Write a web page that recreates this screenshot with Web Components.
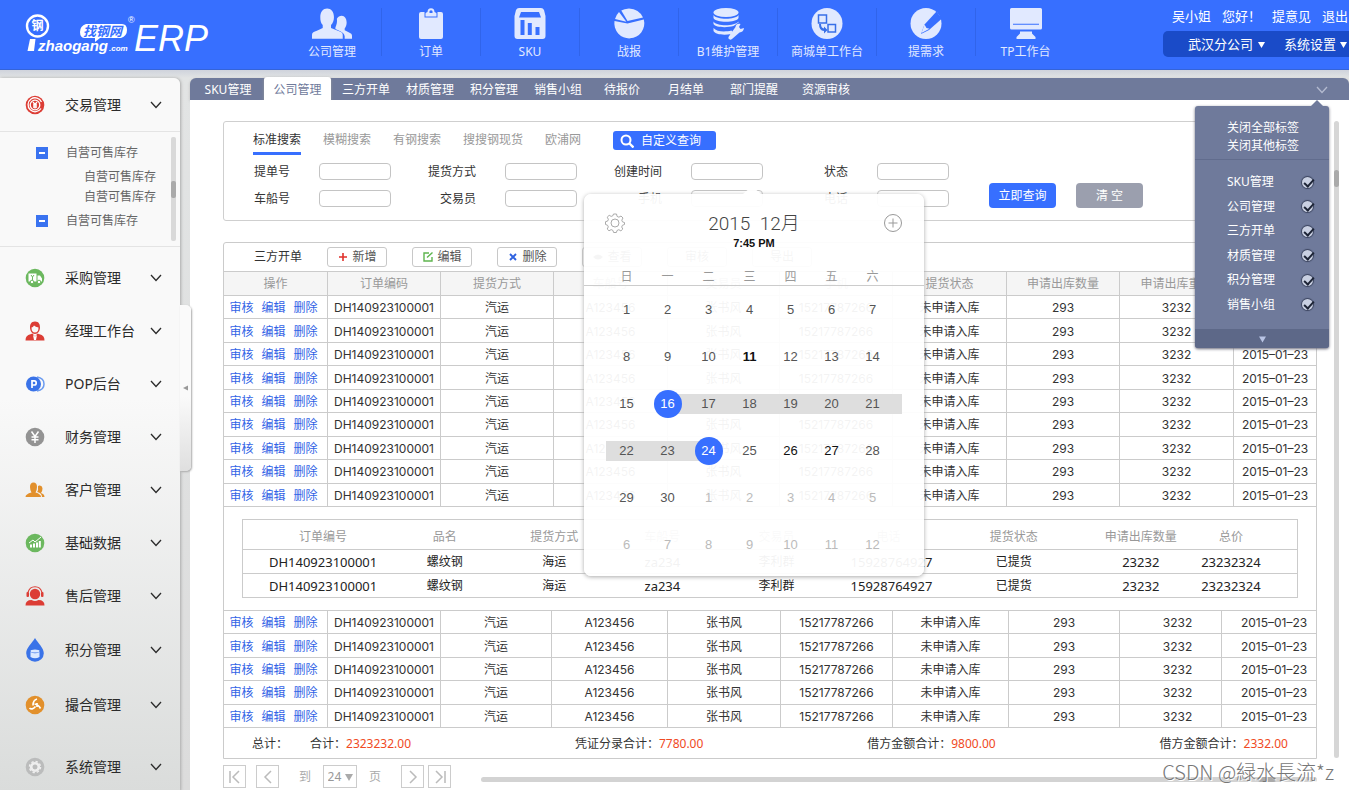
<!DOCTYPE html>
<html lang="zh-CN">
<head>
<meta charset="utf-8">
<title>找钢网 ERP</title>
<style>
html{background:#dfe1e3}
body{margin:0;font:12px/16px "Noto Sans","Noto Sans CJK SC",sans-serif;color:#333}
</style>
</head>
<body>
<erp-app></erp-app>
<script>
const define = (name, css, render) => customElements.define(name, class extends HTMLElement {
  connectedCallback() {
    if (this.shadowRoot) return;
    const root = this.attachShadow({ mode: 'open' });
    root.innerHTML = `<style>*{box-sizing:border-box}button,select,input{font:inherit;color:inherit;margin:0;padding:0;border:0;background:none}a{text-decoration:none;color:inherit}${css}</style>${render(this)}`;
  }
});

const disc = (c, inner) => `<circle cx="10" cy="10" r="9.300" fill="${c}"/>${inner}`;
const icons = {
  people: ['0 0 41 32', `<path d="M0 31v-4c0-2 2-3 5-4l6-3v-3c-2-2-2.500-5-2.500-8 0-6 3-9 7-9s7 3 7 9c0 3-1 6-3 8v3l7 3c3 1 5 2 5 4v4z"/><path d="M33.500 31H41v-3c0-1.500-1-2.300-3-3.200L33.500 22.500v-2c1.500-2 2-4 2-6 0-4-2-7-5-7-2 0-4 1-5 3 .5 3-.2 6-1.500 9v1.500l5 2.500c2.500 1.200 4 2.500 4.500 5z"/>`],
  clipboard: ['0 0 40 32', `<path d="M10 4h3.500v5.500h13V4H30q2 0 2 2v23q0 2-2 2H10q-2 0-2-2V6q0-2 2-2z"/><path fill-rule="evenodd" d="M14.500 8.500V5.500q0-1 2-1.500 0-3.800 3.500-3.800T23.500 4q2 .5 2 1.500v3zM18.500 5h3V3q-1.500-1.500-3 0z"/>`],
  store: ['0 0 40 32', `<path fill-rule="evenodd" d="M9 0h22q2 0 3 2l1.500 6V28q0 3-3 3H7.500q-3 0-3-3V8L6 2q1-2 3-2zM11 4 9 9.500h22L29 4zM10.500 12v15h4V12zM17.800 15v12h4V15zM25.500 19v8h4v-8z"/>`],
  pie: ['0 0 40 32', `<path d="M18.500 15.500 34.800 11.500A15 15 0 1 1 5.500 13z"/><path d="M17.300 13.700 6 11A16 16 0 0 1 10 4z"/><path d="M18.500 13 12.300 2.500Q15 .8 20 .5q10 .5 14 9z"/>`],
  database: ['0 0 40 32', `<ellipse cx="18" cy="4.500" rx="12.500" ry="4.500"/><path d="M5.500 7c3 5 22 5 25 0v3c-2 5-23 5-25 0zM5.500 13.500c3 5 21 5 25 0v1l-5 3.500c-7 2-18 1.500-20-2zM5.500 20c3 4 12 4 18 2.500l1 1.500-1.500 2c-7 1.500-16 .5-17.500-3zM27.500 19c0-3 3-4 5-3l-1.500 3 1.500 2 3.500-1q-.5 4-4.500 4.500L24 31q-2 1.500-3.500-.5-.5-1.500 1-3z"/>`],
  flow: ['0 0 40 32', `<circle cx="20" cy="15.500" r="15.500"/><g fill="none" stroke="#386fe8" stroke-width="1.500"><path d="M11.500 7h8v8h-8zM21 16.500h7.500v7.500H21z"/></g><path fill="#386fe8" d="M14 16q0 4 3 4.500v-2l3.500 3.500-3.500 3.500V23q-5-.5-5-7z"/>`],
  pencil: ['0 0 40 32', `<circle cx="20" cy="15.500" r="15.500"/><path fill="#376fff" d="M18.500 16.500 30.500 3.500 36 10.500 23 22l-8 4z"/><path d="m15.500 25 3-8.500 2 3.500 3 .8z"/>`],
  monitor: ['0 0 40 32', `<path fill-rule="evenodd" d="M5.500 0h29q1.500 0 1.500 1.500V20q0 1.500-1.500 1.500h-29Q4 21.500 4 20V1.500Q4 0 5.500 0zM7 15.800v1h26v-1z"/><path d="M14 23.500h12v2l3.500 3.500v2h-19v-2l3.500-3.500z"/>`],
  trade: ['0 0 20 20', disc('#dc3d35', `<g fill="none" stroke="#fff" stroke-width="1.300"><path d="M16 13.500A7 7 0 1 1 16.500 7"/><circle cx="10" cy="10" r="4.800"/><path d="m8 7 2 2.500L12 7M10 9.500v4M8 10h4M8 12h4"/></g>`)],
  truck: ['0 0 20 20', disc('#6cb85f', `<path fill="#fff" d="M3.500 5.500h8v8h-8zM12.500 7.500h2.500l2 3v3h-4.500z"/><circle cx="7" cy="14" r="1.800" fill="#fff" stroke="#6cb85f"/><circle cx="14" cy="14" r="1.800" fill="#fff" stroke="#6cb85f"/><path stroke="#6cb85f" fill="none" d="m6 7 1.500 2L9 7M7.500 9v3"/>`)],
  manager: ['0 0 20 20', `<g fill="#dc3d35"><path d="M.5 19.500q0-5.500 5-6.300l2-.7 2.500 3 2.500-3 2 .7q5 .8 5 6.300z"/><path fill-rule="evenodd" d="M10 .5c4 0 5 3 5 6s-2 6.500-5 6.500-5-3.500-5-6.500 1-6 5-6zM6.500 6.500q0 5 3.500 5t3.500-5q-3-.3-4.500-2-1 1.800-2.500 2z"/></g><path fill="#fff" d="m8 14 2 1.500 2-1.500-1 5h-2z"/>`],
  pop: ['0 0 20 20', `<g fill="none" stroke="#6b9bf0" stroke-width="1.500"><path d="M12 3q7 1 7 7t-7 7"/></g><circle cx="8.500" cy="10" r="7.500" fill="#3a73e8"/><path fill="none" stroke="#fff" stroke-width="1.700" d="M7 14V6.800h2.200q2 .1 2 2.100t-2 2.100H7"/>`],
  yen: ['0 0 20 20', disc('#939393', `<path stroke="#fff" fill="none" stroke-width="1.500" d="m6.500 4.500 3.500 5 3.500-5M10 9.500v6.500M6.500 10h7M6.500 12.800h7"/>`)],
  clients: ['0 0 20 20', `<g fill="#e2902c"><path d="M.5 17q0-3 6-4.500Q5 10 5 7q0-4.500 3.500-4.500T12 7q0 3-1.500 5.500Q16 14 16 17z"/><path d="M17 17h2.500q0-3-3.500-4 1.500-2 1.500-4.500T15 5.500 13 7q.5 3-.8 5Q17 13 17 17z"/></g>`],
  chart: ['0 0 20 20', disc('#6cb85f', `<g stroke="#fff" fill="none"><path stroke-width="2" d="M6 14.500v-3M9 14.500v-4M12 14.500v-5M14.800 14.500V8"/><path d="m4 10 4-3 2 2 6-5"/></g>`)],
  service: ['0 0 20 20', `<g fill="#dc3d35"><circle cx="10" cy="8" r="5.200"/><path d="M.5 19.500q0-5.500 6-5.500 3.500 2 7 0 6 0 6 5.500z"/><rect x="1.500" y="6" width="2.500" height="5" rx="1"/><rect x="16" y="6" width="2.500" height="5" rx="1"/></g><path fill="none" stroke="#dc3d35" stroke-width="1.100" d="M3 6.500Q4.500.8 10 .8t7 5.700"/>`],
  drop: ['0 0 20 24', `<path fill="#3a73e8" d="M10 0C13 5 18.800 10 18.800 15.200a8.800 8.500 0 0 1-17.600 0C1.200 10 7 5 10 0z"/><g fill="#dce8ff"><ellipse cx="10" cy="13" rx="4.500" ry="1.500"/><path d="M5.500 14q4.500 2.500 9 0v5q-4.500 2.500-9 0z"/></g>`],
  match: ['0 0 20 20', disc('#e2902c', `<path fill="none" stroke="#fff" stroke-width="1.700" d="M12 4q-4 1-4 6.500M4.500 13q2.500 2.500 6-1.500M9.500 9q4 .5 6 4.500M12 8v4"/>`)],
  gear: ['0 0 20 20', disc('#bbbcbc', `<circle cx="10" cy="10" r="3.800" fill="none" stroke="#eee" stroke-width="2.600"/><circle cx="10" cy="10" r="5.500" fill="none" stroke="#eee" stroke-width="1.500" stroke-dasharray="2.300 2"/>`)],
  down: ['0 0 12 12', `<path d="m1 3 5 5.500L11 3" fill="none" stroke="currentColor" stroke-width="1.300"/>`],
  search: ['0 0 14 14', `<circle cx="6" cy="6" r="4.500" fill="none" stroke="currentColor" stroke-width="2"/><path d="m9.500 9.500 4 4" stroke="currentColor" stroke-width="2.400"/>`],
  add: ['0 0 10 10', `<path d="M5 1v8M1 5h8" stroke="#e0312b" stroke-width="1.600"/>`],
  edit: ['0 0 10 10', `<path d="M6 1H1v8h8V5M4 5.500 9.500.5" fill="none" stroke="#5fb54f" stroke-width="1.400"/>`],
  remove: ['0 0 10 10', `<path d="m2 2 6 6M8 2 2 8" stroke="#2f62e0" stroke-width="1.900"/>`],
  view: ['0 0 10 10', `<path d="M0 5q5-5 10 0-5 5-10 0z" fill="#555"/>`],
  cog: ['0 0 20 20', `<g fill="none" stroke="#aaa"><path d="M8.500 1h3l.6 2.400 1.800.8L16 3l2 2-1.200 2.200.7 1.700 2 .6v2l-2.100.8-.7 1.700L17.800 16l-1.900 1.900-2.100-1.200-1.800.8-.6 2h-2.800l-.7-2.100-1.700-.8L4 17.800 2.200 16l1.100-2.100-.8-1.700L.5 11.500v-2.800l2.100-.6.8-1.800L2.200 4.200 4.200 2.300l2 1.100 1.700-.7z"/><circle cx="10" cy="10" r="4"/></g>`],
  plus: ['0 0 20 20', `<g fill="none" stroke="#999"><circle cx="10" cy="10" r="8.500"/><path d="M10 5.500v9M5.500 10h9"/></g>`],
  first: ['0 0 14 14', `<path d="M2 1v12M11 1 5 7l6 6" fill="none" stroke="currentColor" stroke-width="1.500"/>`],
  prev: ['0 0 14 14', `<path d="M10 1 4 7l6 6" fill="none" stroke="currentColor" stroke-width="1.500"/>`],
  next: ['0 0 14 14', `<path d="m4 1 6 6-6 6" fill="none" stroke="currentColor" stroke-width="1.500"/>`],
  last: ['0 0 14 14', `<path d="M12 1v12M3 1l6 6-6 6" fill="none" stroke="currentColor" stroke-width="1.500"/>`],
  caret: ['0 0 8 8', `<path d="M0 1h8L4 8z" fill="currentColor"/>`],
  left: ['0 0 6 6', `<path d="M0 3 5 .5v5z" fill="#999"/>`]
};
define('ui-icon', `:host{display:block;width:12px;height:12px;flex:none}svg{display:block;width:100%;height:100%}`,
  el => { const [box, body] = icons[el.getAttribute('name')]; return `<svg viewBox="${box}" fill="currentColor" aria-hidden="true">${body}</svg>`; });

define('erp-logo', `:host{display:block}svg{display:block;overflow:visible}text{font-family:"Liberation Sans","Noto Sans CJK SC",sans-serif;fill:#fff}`, () => `
<svg width="200" height="54" viewBox="24 12 200 54" role="img" aria-label="找钢网 ERP">
 <circle cx="37.500" cy="26" r="10.500" fill="none" stroke="#fff" stroke-width="2.400"/>
 <text x="31.500" y="30" font-size="12" font-weight="700">钢</text>
 <path d="M30 39h5.500l-1.500 12h-6.500z" fill="#fff"/>
 <text x="38" y="51" font-size="15" font-weight="700" font-style="italic">zhaogang</text>
 <text x="109" y="51" font-size="8" font-weight="700" font-style="italic">.com</text>
 <path d="M86 24h36q5 0 5 6t-6 8h-21l-5 4v-4h-10q-5 0-5-6t6-8z" fill="#fff"/>
 <text x="83" y="36" font-size="13" font-weight="700" font-style="italic" style="fill:#376fff">找钢网</text>
 <text x="128" y="23" font-size="9">®</text>
 <text x="134" y="51" font-size="36" font-style="italic">ERP</text>
</svg>`);

define('nav-item', `:host{display:block;flex:0 0 99px}
:host(:not(:last-of-type)) a{border-right:1px solid #3064ea}
a{display:flex;flex-direction:column;align-items:center;gap:4px;height:48px;color:#e1e9ff}
ui-icon{width:40px;height:32px}`,
  el => `<a href="#"><ui-icon name="${el.getAttribute('icon')}"></ui-icon><slot></slot></a>`);

define('erp-header', `:host{display:flex;height:70px;background:#376fff;color:#fff;border-bottom:1px solid #3564d8}
erp-logo{padding:12px 0 0 24px;flex:0 0 283px}
nav{display:flex;padding-top:8px;flex:1}
.user{flex:0 0 186px;display:flex;flex-direction:column;gap:7px;padding-top:8px;font-size:13px;overflow:hidden}
.links{display:flex;gap:11px;padding-left:9px;white-space:nowrap}
.bar{display:flex;align-items:center;height:26px;background:#1a4bc8;border-radius:5px 0 0 5px;padding-left:25px;gap:19px}
.pick{display:flex;align-items:center;gap:4px;white-space:nowrap;flex:none}
select{appearance:none;line-height:16px}
option{color:#333}
ui-icon{width:7px;height:7px}`, () => `
<erp-logo></erp-logo>
<nav aria-label="主导航">
<nav-item icon="people">公司管理</nav-item><nav-item icon="clipboard">订单</nav-item><nav-item icon="store">SKU</nav-item><nav-item icon="pie">战报</nav-item><nav-item icon="database">B1维护管理</nav-item><nav-item icon="flow">商城单工作台</nav-item><nav-item icon="pencil">提需求</nav-item><nav-item icon="monitor">TP工作台</nav-item>
</nav>
<div class="user">
 <div class="links"><span>吴小姐</span><span>您好！</span><a href="#">提意见</a><a href="#">退出</a></div>
 <div class="bar"><span class="pick"><select aria-label="分公司"><option>武汉分公司</option></select><ui-icon name="caret"></ui-icon></span>
 <button class="pick" aria-haspopup="menu">系统设置<ui-icon name="caret"></ui-icon></button></div>
</div>`);

define('side-item', `:host{display:block;height:53px;font-size:14px;line-height:20px;color:#2b2b2b}
:host(.tall){height:55px}:host(.end){height:49px;margin-top:10px}
button{display:grid;grid-template-columns:20px minmax(0,1fr) 12px;column-gap:20px;align-items:center;width:100%;height:100%;padding:0 18px 0 25px;text-align:left;white-space:nowrap}
slot{display:block;min-width:0}
.mark{width:20px;height:20px}:host([icon=drop]) .mark{height:24px}`,
  el => `<button><ui-icon class="mark" name="${el.getAttribute('icon')}"></ui-icon><slot></slot><ui-icon name="down"></ui-icon></button>`);

define('side-tree', `:host{display:block;position:relative;height:116px;margin-bottom:4px;border:solid #e4e4e4;border-width:1px 0;padding-top:11px;color:#666}
ul{list-style:none;margin:0;padding:0}
li a{display:grid;grid-template-columns:12px 1fr;column-gap:18px;align-items:center;height:20px;margin-left:36px}
.kids{padding:4px 0}
.kids a{display:block;line-height:20px;margin-left:84px}
.box{width:12px;height:12px;border:solid #3a73f0;border-width:5px 3px;background:#fff}
.track{position:absolute;right:4px;top:5px;width:5px;height:104px;border-radius:2px;background:#d9d9d9}
.track::after{content:"";display:block;margin-top:44px;height:17px;border-radius:2px;background:#aaa}`, () => `
<ul><li><a href="#"><span class="box"></span>自营可售库存</a>
<ul class="kids"><li><a href="#">自营可售库存</a></li><li><a href="#">自营可售库存</a></li></ul></li>
<li><a href="#"><span class="box"></span>自营可售库存</a></li></ul><span class="track"></span>`);

define('erp-sidebar', `:host{display:block;position:relative;flex:0 0 180px;background:linear-gradient(#f9f9f9 45%,#dadcdb);border-radius:0 6px 0 0;box-shadow:1px 0 3px #aaa}
.handle{position:absolute;left:180px;top:227px;width:11px;height:166px;display:flex;align-items:center;justify-content:center;background:linear-gradient(#fafafa 55%,#dfdfdf);border-radius:0 5px 5px 0;box-shadow:1px 1px 2px #aaa;z-index:1}
.handle ui-icon{width:6px;height:6px}`, () => `
<side-item icon="trade">交易管理</side-item>
<side-tree></side-tree>
<side-item icon="truck">采购管理</side-item><side-item icon="manager">经理工作台</side-item><side-item icon="pop">POP后台</side-item><side-item icon="yen">财务管理</side-item><side-item icon="clients">客户管理</side-item><side-item icon="chart">基础数据</side-item><side-item icon="service">售后管理</side-item><side-item class="tall" icon="drop">积分管理</side-item><side-item class="tall" icon="match">撮合管理</side-item><side-item class="end" icon="gear">系统管理</side-item>
<button class="handle" aria-label="收起侧栏"><ui-icon name="left"></ui-icon></button>`);

define('tab-strip', `:host{display:flex;height:22px;background:#6f7a9b;border-radius:6px 6px 0 0;color:#fff;box-shadow:0 1px 3px #bbb;padding-left:6px}
button{width:64px;flex:none;white-space:nowrap;padding-top:2px}
.on{width:67px;height:26px;margin:-1px 3px 0 4px;background:#fff;color:#6f7a9b;border-radius:3px;box-shadow:0 1px 3px #999;padding:0}
.wide{width:72px}
.more{width:20px;margin:0 17px 0 auto;display:flex;align-items:center;justify-content:center;color:#b4bbd0}`, () => `
<button>SKU管理</button><button class="on">公司管理</button><button>三方开单</button><button>材质管理</button><button>积分管理</button><button>销售小组</button><button>待报价</button><button>月结单</button><button class="wide">部门提醒</button><button class="wide">资源审核</button><button class="more" aria-label="标签菜单"><ui-icon name="down"></ui-icon></button>`);

define('tab-menu', `:host{display:block;width:134px;background:#6f7a9b;border-radius:3px;color:#fff;box-shadow:0 1px 3px #667}
:host::before{content:"";position:absolute;right:6px;top:-6px;border:6px solid transparent;border-top:0;border-bottom-color:#6f7a9b}
.all{display:flex;flex-direction:column;height:54px;padding:13px 0 0 32px;border-bottom:1px solid #616c8d}
.all button{text-align:left;height:18px;line-height:18px}
.list{display:grid;grid-template-rows:repeat(6,1fr);height:147px;margin:10px 0 12px}
label{display:flex;align-items:center;justify-content:space-between;padding:0 16px 0 32px}
input{appearance:none;position:relative;width:11px;height:11px;border-radius:50%;background:#c9d0e2;box-shadow:0 0 1px 1px #3a435e}
input:checked::after{content:"";position:absolute;left:4px;top:0;width:4px;height:8px;border:solid #1d2436;border-width:0 2px 2px 0;transform:rotate(42deg)}
.foot{display:flex;align-items:center;justify-content:center;width:100%;height:19px;background:#5d6888;border-radius:0 0 3px 3px;color:#b9c4e4}
.foot ui-icon{width:7px;height:8px}`, () => `
<div class="all"><button>关闭全部标签</button><button>关闭其他标签</button></div>
<div class="list">${['SKU管理','公司管理','三方开单','材质管理','积分管理','销售小组'].map(t => `<label>${t}<input type="checkbox" checked></label>`).join('')}</div>
<button class="foot" aria-label="更多"><ui-icon name="caret"></ui-icon></button>`);

const days = [...Array(30).keys()].map(i => i + 1).concat([...Array(12).keys()].map(i => i + 1));
define('date-popover', `:host{display:block;width:340px;height:382px;background:rgba(255,255,255,.945);border-radius:7px;box-shadow:0 1px 4px #aaa;font-family:"Liberation Sans","Noto Sans CJK SC",sans-serif;color:#555}
:host::before{content:"";position:absolute;left:159px;top:-8px;border:9px solid transparent;border-top:0;border-bottom:8px solid rgba(255,255,255,.96)}
header{display:grid;grid-template-columns:20px 1fr 20px;align-items:start;padding:19px 21px 0;height:75px}
header ui-icon{width:20px;height:20px}
h2{margin:0;text-align:center;font:300 19px/22px Roboto,"Noto Sans CJK SC",sans-serif;color:#444;white-space:pre}
time{display:block;font:700 11px/16px "Liberation Sans",sans-serif;color:#111}
.week{display:grid;grid-template-columns:repeat(7,41px);height:17px;padding-left:22px;text-align:center;color:#999;border-bottom:1px solid #ccc}
.week span{line-height:16px}
.days{display:grid;grid-template-columns:repeat(7,41px);grid-template-rows:repeat(6,1fr);height:283px;padding-left:22px;align-items:center}
.days button{height:20px;font-size:13px;line-height:20px;color:#555}
.days .out{color:#bbb}.days .b{font-weight:700;color:#111}.days .d{color:#111}
.days .r{background:#dedede}
.days .l{box-shadow:9px 0 #dedede}
.days .s{position:relative;z-index:0;color:#fff}
.s::before{content:"";position:absolute;z-index:-1;left:7px;top:-4px;width:28px;height:28px;border-radius:50%;background:#376fff}
.s::after{content:"";position:absolute;z-index:-2;top:0;height:20px;width:20px;background:#dedede}
.from::after{right:0}.to::after{left:0}`, () => `
<header><button aria-label="设置"><ui-icon name="cog"></ui-icon></button><h2>2015  12月<time>7:45 PM</time></h2><button aria-label="新增"><ui-icon name="plus"></ui-icon></button></header>
<div class="week">${[...'日一二三四五六'].map(d => `<span>${d}</span>`).join('')}</div>
<div class="days">${days.map((d, i) => {
  const n = i + 1;
  const c = n > 30 ? 'out' : n === 11 ? 'b' : n === 26 || n === 27 ? 'd' : n === 16 ? 's from' : n === 24 ? 's to' : n > 16 && n < 24 ? (n === 21 ? 'r l' : 'r') : '';
  return `<button class="${c}">${d}</button>`; }).join('')}</div>`);

const field = (label, id, extra = '') => `<label for="${id}">${label}</label><span class="slot"><input id="${id}" type="text">${extra}</span>`;
define('search-panel', `:host{display:block;height:100px;border:1px solid #cfcfcf;border-radius:3px;padding:9px 29px 0}
.tabs{display:flex;align-items:flex-start;gap:22px;color:#999}
.tabs button{height:24px;padding-bottom:6px}
.tabs .on{color:#333;padding-bottom:3px;border-bottom:3px solid #376fff}
.tabs .custom{display:flex;align-items:center;gap:7px;width:103px;height:19px;margin-left:10px;padding:0 0 0 7px;background:#376fff;color:#fff;border-radius:3px}
.custom ui-icon{width:14px;height:14px}
.form{display:flex;align-items:center}
.fields{display:grid;grid-template-columns:66px 72px repeat(3,114px 72px);grid-auto-rows:27px;margin-top:3px;align-items:center}
label{text-align:right;padding-right:29px;white-space:nowrap}
.slot{display:block;position:relative;height:17px}
input{display:block;width:72px;height:17px;border:1px solid #c4c4c4;border-radius:4px;background:#fff;padding:0 4px}
date-popover{position:absolute;left:-107px;top:31px;z-index:5}
.go{display:flex;gap:20px;margin:24px 0 0 40px}
.go button{width:67px;height:25px;border-radius:4px;background:#376fff;color:#fff}
.go .clear{background:#9b9fae}`, () => `
<div class="tabs"><button class="on">标准搜索</button><button>模糊搜索</button><button>有钢搜索</button><button>搜搜钢现货</button><button>欧浦网</button><button class="custom"><ui-icon name="search"></ui-icon>自定义查询</button></div>
<div class="form"><div class="fields">
${field('提单号', 'bill')}${field('提货方式', 'way')}${field('创建时间', 'created', '<date-popover></date-popover>')}${field('状态', 'state')}
${field('车船号', 'ship')}${field('交易员', 'trader')}${field('手机', 'mobile')}${field('电话', 'phone')}
</div><div class="go"><button>立即查询</button><button class="clear">清 空</button></div></div>`);

const cols = w => `<colgroup>${w.map(x => `<col style="width:${x}px">`).join('')}</colgroup>`;
const heads = h => `<thead><tr>${h.map(x => `<th>${x}</th>`).join('')}</tr></thead>`;
const cells = ['DH140923100001', '汽运', 'A123456', '张书风', '15217787266', '未申请入库', '293', '3232', '2015–01–23'];
const tableCss = `:host{display:block}table{width:100%;table-layout:fixed;border-spacing:0;text-align:center}
th,td{padding:0;font-weight:400;border:solid #cbcbcb;border-width:0 1px 1px 0;line-height:16px;white-space:nowrap}
th{color:#999}tr>:last-child{border-right:0}`;
define('order-table', `${tableCss}
table{font-family:Inter,"Noto Sans CJK SC",sans-serif;height:117px}
:host([head]) table{height:235px}
th{height:24px;background:#f5f5f5}td{height:23px;padding-top:2px}
td:first-child{padding-right:4px}
td a{color:#3263e6;margin:0 4px}
:host(:not([head])) td:nth-child(9){padding-left:14px}:host(:not([head])) td:nth-child(10){padding-left:10px}`, el => {
  const top = el.hasAttribute('head');
  const w = top ? [104,113,113,114,112,113,114,113,114,82] : [104,113,111,116,113,112,116,111,102,94];
  const row = `<tr><td><a href="#">审核</a><a href="#">编辑</a><a href="#">删除</a></td>${cells.map(c => `<td>${c}</td>`).join('')}</tr>`;
  return `<table>${cols(w)}${top ? heads(['操作','订单编码','提货方式','车船号','交易员','手机','提货状态','申请出库数量','申请出库重量','创建时间']) : ''}<tbody>${row.repeat(top ? 9 : 5)}</tbody></table>`;
});
define('detail-table', `${tableCss}:host{padding:12px 18px;border-bottom:1px solid #cbcbcb}
table{border:solid #cbcbcb;border-width:1px 1px 0 1px}
th,td{border-right:0;height:24px}th{height:30px;padding-top:4px}
.n{font-size:13px}tr>:last-child{padding-right:16px}td{color:#222}`, () => {
  const row = ['DH140923100001','螺纹钢','海运','za234','李利群','15928764927','已提货','23232','23232324'];
  return `<table>${cols([160,83,136,80,148,76,174,80,116])}${heads(['订单编号','品名','提货方式','车船号','交易员','电话','提货状态','申请出库数量','总价'])}<tbody>${`<tr>${row.map(c => `<td${/\d/.test(c) ? ' class="n"' : ''}>${c}</td>`).join('')}</tr>`.repeat(2)}</tbody></table>`;
});

define('order-panel', `:host{display:block;border:1px solid #cbcbcb;border-radius:3px 3px 0 0}
.tools{display:flex;align-items:center;gap:25px;height:29px;padding-left:30px;border-bottom:1px solid #cbcbcb}
.tools button{display:flex;align-items:center;justify-content:center;gap:5px;width:60px;height:20px;border:1px solid #c8c8c8;border-radius:3px;color:#555}
.tools ui-icon{width:10px;height:10px}
.sum{display:flex;justify-content:space-between;align-items:center;height:30px;padding:2px 28px 0}
.sum b{font-weight:400;color:#f04a24}.sum i{font-style:normal;margin-right:22px}`, () => `
<div class="tools"><span>三方开单</span><button><ui-icon name="add"></ui-icon>新增</button><button><ui-icon name="edit"></ui-icon>编辑</button><button><ui-icon name="remove"></ui-icon>删除</button><button><ui-icon name="view"></ui-icon>查看</button><button>审核</button><button>导出</button></div>
<order-table head></order-table><detail-table></detail-table><order-table></order-table>
<div class="sum"><span><i>总计：</i>合计：<b>2323232.00</b></span><span>凭证分录合计：<b>7780.00</b></span><span>借方金额合计：<b>9800.00</b></span><span>借方金额合计：<b>2332.00</b></span></div>`);

define('pager-bar', `:host{display:flex;align-items:center;margin-top:6px;height:23px;color:#aaa}
button,.size{display:flex;align-items:center;justify-content:center;width:23px;height:23px;border:1px solid #ccc;color:#bbb}
button ui-icon{width:14px;height:14px}
.prev{margin-left:10px}.to{margin:0 12px 0 20px}.size{width:34px;gap:3px;color:#999}
select{appearance:none}.size ui-icon{width:8px;height:8px;color:#aaa}
.page{margin:0 20px 0 12px}.last{margin-left:4px}
.track{flex:1;height:5px;margin:6px 0 0 30px;border-radius:3px;background:#d3d3d3}
.track::after{content:"";display:block;width:18px;height:5px;margin-left:93%;border-radius:3px;background:#aaa}`, () => `
<button aria-label="首页"><ui-icon name="first"></ui-icon></button><button class="prev" aria-label="上一页"><ui-icon name="prev"></ui-icon></button>
<label class="to" for="size">到</label><span class="size"><select id="size"><option>24</option></select><ui-icon name="caret"></ui-icon></span><span class="page">页</span>
<button aria-label="下一页"><ui-icon name="next"></ui-icon></button><button class="last" aria-label="末页"><ui-icon name="last"></ui-icon></button><span class="track"></span>`);

define('erp-main', `:host{display:flex;flex-direction:column;flex:1;min-width:0;margin-left:10px;position:relative}
.body{flex:1;display:grid;grid-template-columns:minmax(0,1fr) 5px;column-gap:17px;padding:21px 10px 0 33px;background:#fff}
search-panel{margin-bottom:21px}
.rail{display:flow-root;height:637px;background:#d6d6d6;border-radius:3px}
.rail::after{content:"";display:block;height:17px;margin-top:49px;border-radius:3px;background:#aaa}
tab-menu{position:absolute;right:20px;top:28px;z-index:6}`, () => `
<tab-strip></tab-strip>
<div class="body"><div><search-panel></search-panel><order-panel></order-panel><pager-bar></pager-bar></div><div class="rail"></div></div>
<tab-menu></tab-menu>`);

define('erp-app', `:host{display:flex;flex-direction:column;min-height:100vh;position:relative;overflow:hidden}
.row{display:flex;flex:1;padding-top:8px;background:linear-gradient(#cfd3dc,#e2e4e4 8px,#dcdcdc)}
.mark{position:absolute;right:15px;bottom:7px;font:300 20px/24px "Noto Sans CJK JP",sans-serif;color:#777;text-shadow:1px 1px #fff;z-index:7}`, () => `
<erp-header></erp-header><div class="row"><erp-sidebar></erp-sidebar><erp-main></erp-main></div><span class="mark">CSDN @緑水長流*z</span>`);
</script>
</body>
</html>
